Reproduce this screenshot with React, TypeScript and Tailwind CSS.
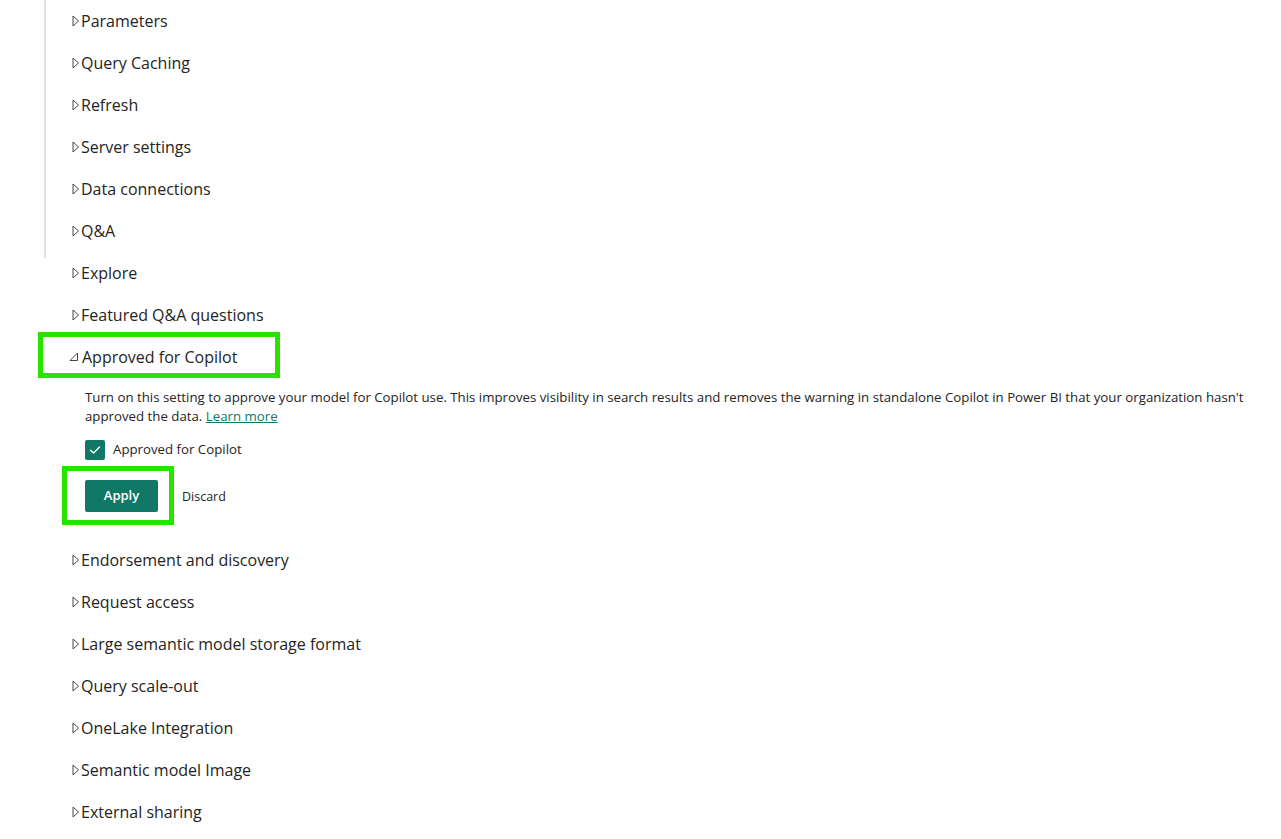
import React from "react";

const FONT = { fontFamily: '"Open Sans", "Noto Sans", sans-serif' };

function Caret({ open = false }: { open?: boolean }) {
  if (open) {
    return (
      <svg width="10" height="10" viewBox="0 0 10 10" className="mr-[3px] shrink-0">
        <path d="M8.5 1 L8.5 8.5 L1 8.5 Z" fill="none" stroke="#484644" strokeWidth="1" strokeLinejoin="round" />
      </svg>
    );
  }
  return (
    <svg width="8" height="12" viewBox="0 0 8 12" className="mr-[1px] shrink-0">
      <path d="M1 1 L6.5 6 L1 11 Z" fill="none" stroke="#484644" strokeWidth="1" strokeLinejoin="round" />
    </svg>
  );
}

function Row({ label, open = false }: { label: string; open?: boolean }) {
  return (
    <div className={`flex h-[42px] items-center ${open ? "pl-[23px]" : "pl-[26px]"}`}>
      <Caret open={open} />
      <span className="text-[16px] text-[#252423]">{label}</span>
    </div>
  );
}

export default function App() {
  const top = ["Parameters", "Query Caching", "Refresh", "Server settings", "Data connections", "Q&A"];
  const bottom = [
    "Endorsement and discovery",
    "Request access",
    "Large semantic model storage format",
    "Query scale-out",
    "OneLake Integration",
    "Semantic model Image",
    "External sharing",
  ];
  return (
    <div className="relative h-[839px] w-full overflow-hidden bg-white" style={FONT}>
      <div className="ml-[44px] flex flex-col">
        <div className="border-l-2 border-[#e1dfdd] pb-[6px]">
          {top.map((t) => (
            <Row key={t} label={t} />
          ))}
        </div>
        <div className="-mt-[6px] pl-[2px]">
          <Row label="Explore" />
          <Row label="Featured Q&A questions" />
          <Row label="Approved for Copilot" open />
          <div className="pl-[39px] pt-[10px]">
            <p className="max-w-[1180px] text-[13.25px] leading-[19px] text-[#252423]">
              Turn on this setting to approve your model for Copilot use. This improves visibility in search results and
              removes the warning in standalone Copilot in Power BI that your organization hasn't approved the data.{" "}
              <a className="text-[#117865] underline">Learn more</a>
            </p>
            <label className="mt-[14px] flex h-[20px] items-center gap-[8px]">
              <span className="flex h-[20px] w-[20px] items-center justify-center rounded-[2px] bg-[#117865]">
                <svg width="12" height="10" viewBox="0 0 12 10">
                  <path d="M1.5 5.2 L4.5 8 L10.5 2" fill="none" stroke="white" strokeWidth="1.4" strokeLinecap="round" strokeLinejoin="round" />
                </svg>
              </span>
              <span className="text-[13.25px] text-[#252423]">Approved for Copilot</span>
            </label>
            <div className="mt-[20px] flex items-center gap-[24px]">
              <button className="h-[32px] w-[73px] rounded-[2px] bg-[#117865] text-[13px] font-semibold text-white">
                Apply
              </button>
              <span className="pt-[2px] text-[12.5px] text-[#252423]">Discard</span>
            </div>
          </div>
          <div className="mt-[27px]">
            {bottom.map((t) => (
              <Row key={t} label={t} />
            ))}
          </div>
        </div>
      </div>
      {/* highlight frames drawn over the section header and the Apply button */}
      <div className="pointer-events-none absolute left-[38px] top-[332px] h-[46px] w-[242px] border-[5px] border-[#2ae100]" />
      <div className="pointer-events-none absolute left-[62px] top-[466px] h-[59px] w-[112px] border-[5px] border-[#2ae100]" />
    </div>
  );
}
